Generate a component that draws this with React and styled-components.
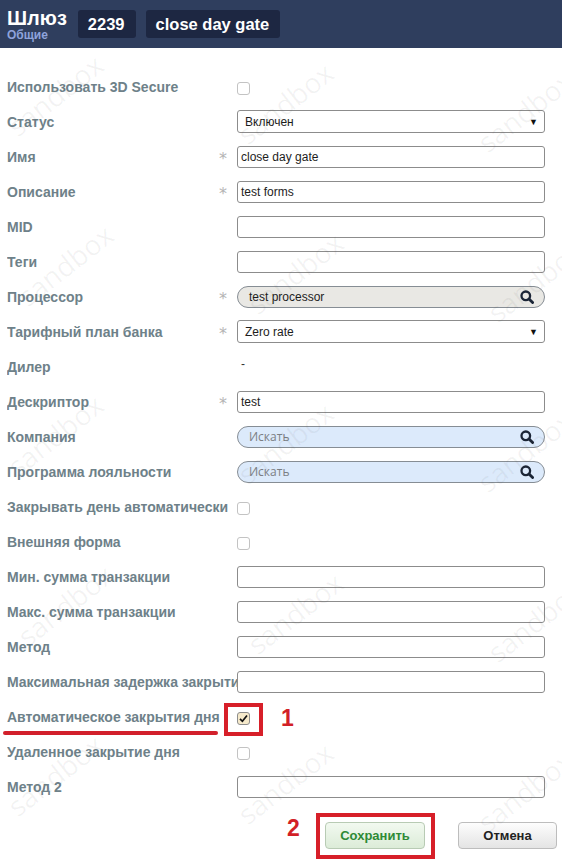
import React from "react";
import styled, { createGlobalStyle } from "styled-components";

const Global = createGlobalStyle`
  html, body { margin: 0; padding: 0; background: #ffffff; }
  body { font-family: "Liberation Sans", Arial, sans-serif; }
  * { box-sizing: border-box; }
`;

const Page = styled.div`
  position: relative;
  width: 562px;
  height: 860px;
  overflow: hidden;
  background: #fff;
`;

const Header = styled.header`
  display: flex;
  align-items: center;
  height: 48px;
  padding: 0 7px;
  gap: 10px;
  background: #2f3e5e;
`;

const TitleBlock = styled.div`
  display: flex;
  flex-direction: column;
  margin-right: 1px;
  margin-top: 1px;
`;

const Title = styled.div`
  color: #fff;
  font-weight: bold;
  font-size: 20px;
  line-height: 21px;
`;

const Subtitle = styled.div`
  color: #8ea3dc;
  font-weight: bold;
  font-size: 12px;
  line-height: 12px;
`;

const Badge = styled.div`
  display: flex;
  align-items: center;
  height: 28px;
  padding: 0 11px 0 10px;
  border-radius: 3px;
  background: #1d2742;
  color: #fff;
  font-weight: bold;
  font-size: 16.5px;
`;

const Form = styled.div`
  padding: 21px 17px 0 7px;
`;

const Row = styled.div`
  position: relative;
  display: flex;
  align-items: center;
  height: 35px;
`;

const LabelCell = styled.div`
  display: flex;
  align-items: center;
  width: 230px;
  flex: none;
`;

const LabelText = styled.div`
  flex: 1;
  min-width: 0;
  overflow: hidden;
  white-space: nowrap;
  color: #6e8189;
  font-weight: bold;
  font-size: 14px;
`;

const Star = styled.span`
  width: 22px;
  flex: none;
  padding-left: 4px;
  color: #b4b4b4;
  font-family: "DejaVu Sans", sans-serif;
  font-size: 16px;
  line-height: 16px;
  margin-top: 5px;
`;

const Field = styled.div`
  flex: 1;
  min-width: 0;
  display: flex;
  align-items: center;
`;

const TextInput = styled.div`
  display: flex;
  align-items: center;
  width: 100%;
  height: 22px;
  padding: 0 3px;
  border: 1px solid #8c8c8c;
  border-radius: 3px;
  background: #fff;
  color: #1d1d1d;
  font-size: 12px;
`;

const SelectBox = styled.div`
  display: flex;
  align-items: center;
  justify-content: space-between;
  width: 100%;
  height: 23px;
  padding: 0 6px 0 7px;
  border: 1px solid #8c8c8c;
  border-radius: 3px;
  background: #fff;
  color: #1d1d1d;
  font-size: 12px;
`;

const Arrow = styled.span`
  font-size: 9px;
  line-height: 10px;
  color: #111;
`;

const SearchPill = styled.div`
  display: flex;
  align-items: center;
  justify-content: space-between;
  width: calc(100% + 2px);
  height: 22px;
  padding: 0 10px 0 11px;
  border: 1px solid #868d94;
  border-radius: 11px;
  background: ${(p) => p.$bg};
  color: ${(p) => (p.$placeholder ? "#7b7f84" : "#1d1d1d")};
  font-family: ${(p) =>
    p.$placeholder ? '"Open Sans", "Liberation Sans", sans-serif' : '"Liberation Sans", Arial, sans-serif'};
  font-size: 12px;
`;

const Dash = styled.span`
  padding-left: 4px;
  margin-top: -6px;
  color: #333;
  font-size: 12px;
`;

const CheckWrap = styled.span`
  position: relative;
  display: inline-flex;
  margin-top: 3px;
`;

const Checkbox = styled.span`
  display: inline-flex;
  align-items: center;
  justify-content: center;
  width: 13px;
  height: 13px;
  border: 1px solid ${(p) => (p.$checked ? "#8d8d8d" : "#c3c3c3")};
  border-radius: 3px;
  background: ${(p) => (p.$checked ? "#f6eacb" : "#fff")};
`;

const RedFrame = styled.span`
  position: absolute;
  top: ${(p) => p.$t}px;
  right: ${(p) => p.$r}px;
  bottom: ${(p) => p.$b}px;
  left: ${(p) => p.$l}px;
  border: 4px solid #d71f29;
  pointer-events: none;
`;

const Mark = styled.span`
  position: absolute;
  top: ${(p) => p.$t}px;
  left: ${(p) => p.$l}px;
  color: #d21f27;
  font-weight: bold;
  font-size: 23px;
  line-height: 23px;
`;

const Underline = styled.span`
  position: absolute;
  left: -4px;
  top: 32px;
  width: 215px;
  height: 4px;
  border-radius: 2px;
  background: #d2202b;
`;

const Buttons = styled.div`
  display: flex;
  justify-content: flex-end;
  gap: 33px;
  padding-right: 5px;
  margin-top: 18px;
`;

const BtnWrap = styled.div`
  position: relative;
`;

const Button = styled.div`
  display: flex;
  align-items: center;
  justify-content: center;
  width: ${(p) => p.$w}px;
  height: 27px;
  border-radius: 4px;
  font-weight: bold;
  font-size: 13px;
  border: 1px solid ${(p) => (p.$primary ? "#b8cbb4" : "#bdbdbd")};
  color: ${(p) => (p.$primary ? "#2e8a36" : "#222")};
  background: ${(p) =>
    p.$primary
      ? "linear-gradient(#f2f9f0, #dcecd8)"
      : "linear-gradient(#fdfdfd, #e4e4e4)"};
`;

const WatermarkLayer = styled.div`
  position: absolute;
  inset: 0;
  pointer-events: none;
`;

const Watermark = styled.span`
  position: absolute;
  transform: translate(-50%, -50%) rotate(-38deg);
  color: rgba(60, 60, 60, 0.06);
  font-family: "Open Sans", sans-serif;
  font-size: 28px;
  white-space: nowrap;
`;

const SearchIcon = () => (
  <svg width="14" height="14" viewBox="0 0 14 14">
    <circle cx="5.8" cy="5.8" r="4.3" fill="none" stroke="#1b2536" strokeWidth="2.3" />
    <line x1="9" y1="9" x2="12.6" y2="12.6" stroke="#1b2536" strokeWidth="2.8" strokeLinecap="round" />
  </svg>
);

const CheckIcon = () => (
  <svg width="9" height="9" viewBox="0 0 9 9">
    <path d="M1 4.8 L3.4 7.3 L8 1.5" fill="none" stroke="#111" strokeWidth="1.7" />
  </svg>
);

const rows = [
  { label: "Использовать 3D Secure", type: "check" },
  { label: "Статус", type: "select", value: "Включен" },
  { label: "Имя", req: true, type: "text", value: "close day gate" },
  { label: "Описание", req: true, type: "text", value: "test forms" },
  { label: "MID", type: "text", value: "" },
  { label: "Теги", type: "text", value: "" },
  { label: "Процессор", req: true, type: "search", value: "test processor", bg: "#e9e8e4" },
  { label: "Тарифный план банка", req: true, type: "select", value: "Zero rate" },
  { label: "Дилер", type: "dash" },
  { label: "Дескриптор", req: true, type: "text", value: "test" },
  { label: "Компания", type: "search", placeholder: "Искать", bg: "#dceafb" },
  { label: "Программа лояльности", type: "search", placeholder: "Искать", bg: "#dceafb" },
  { label: "Закрывать день автоматически", type: "check" },
  { label: "Внешняя форма", type: "check" },
  { label: "Мин. сумма транзакции", type: "text", value: "" },
  { label: "Макс. сумма транзакции", type: "text", value: "" },
  { label: "Метод", type: "text", value: "" },
  { label: "Максимальная задержка закрытия дня", type: "text", value: "" },
  { label: "Автоматическое закрытия дня", type: "check", checked: true, annotate: true },
  { label: "Удаленное закрытие дня", type: "check" },
  { label: "Метод 2", type: "text", value: "" },
];

const renderField = (r) => {
  switch (r.type) {
    case "check":
      return (
        <CheckWrap>
          <Checkbox $checked={r.checked}>{r.checked && <CheckIcon />}</Checkbox>
          {r.annotate && (
            <>
              <RedFrame $t={-9} $r={-13} $b={-11} $l={-13} />
              <Mark $t={-5} $l={44}>1</Mark>
            </>
          )}
        </CheckWrap>
      );
    case "select":
      return (
        <SelectBox>
          <span>{r.value}</span>
          <Arrow>▼</Arrow>
        </SelectBox>
      );
    case "search":
      return (
        <SearchPill $bg={r.bg} $placeholder={!!r.placeholder}>
          <span>{r.value || r.placeholder}</span>
          <SearchIcon />
        </SearchPill>
      );
    case "dash":
      return <Dash>-</Dash>;
    default:
      return <TextInput>{r.value}</TextInput>;
  }
};

const marks = [];
[95, 265, 435, 605, 775].forEach((y, i) => {
  [55, 285, 525].forEach((x, j) => {
    marks.push({ x: x + (i % 2) * 10, y: y + j * 8 });
  });
});

export default function App() {
  return (
    <>
      <Global />
      <Page>
        <Header>
          <TitleBlock>
            <Title>Шлюз</Title>
            <Subtitle>Общие</Subtitle>
          </TitleBlock>
          <Badge>2239</Badge>
          <Badge>close day gate</Badge>
        </Header>
        <Form>
          {rows.map((r) => (
            <Row key={r.label}>
              <LabelCell>
                <LabelText>{r.label}</LabelText>
                {r.req && <Star>*</Star>}
              </LabelCell>
              <Field>{renderField(r)}</Field>
              {r.annotate && <Underline />}
            </Row>
          ))}
        </Form>
        <Buttons>
          <BtnWrap>
            <Button $primary $w={100}>Сохранить</Button>
            <RedFrame $t={-9} $r={-10} $b={-10} $l={-9} />
            <Mark $t={-5} $l={-38}>2</Mark>
          </BtnWrap>
          <Button $w={99}>Отмена</Button>
        </Buttons>
        <WatermarkLayer>
          {marks.map((m, i) => (
            <Watermark key={i} style={{ left: m.x, top: m.y }}>
              sandbox
            </Watermark>
          ))}
        </WatermarkLayer>
      </Page>
    </>
  );
}
